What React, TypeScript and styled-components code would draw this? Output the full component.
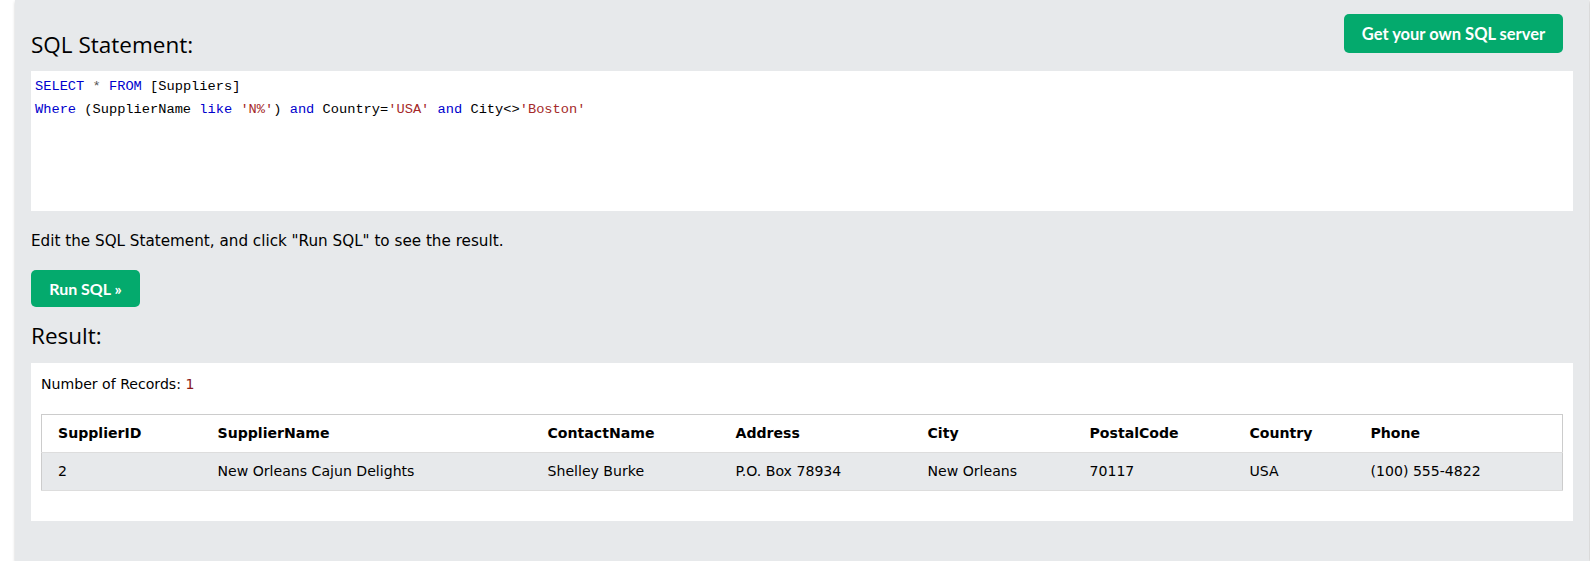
import styled, { createGlobalStyle } from "styled-components";

const GlobalStyle = createGlobalStyle`
  body {
    margin: 0;
    background: #ffffff;
    font-family: "DejaVu Sans", Verdana, sans-serif;
    color: #000000;
  }
`;

const Page = styled.div`
  padding-left: 15px;
  padding-right: 1px;
`;

const Panel = styled.div`
  background: #e7e9eb;
  padding: 0 16px 40px 16px;
  box-shadow: 0 2px 3px rgba(0, 0, 0, 0.18), 1px 0 2px rgba(0, 0, 0, 0.12);
`;

const TopRow = styled.div`
  display: flex;
  justify-content: space-between;
  align-items: flex-start;
`;

const Heading = styled.h2<{ $top: number }>`
  margin: ${(p) => p.$top}px 0 0 0;
  font-family: "Open Sans", "Noto Sans", sans-serif;
  font-weight: 400;
  font-size: 22.5px;
  line-height: 27px;
`;

const GreenButton = styled.button<{ $wide?: boolean }>`
  border: none;
  border-radius: 5px;
  background: #04aa6d;
  color: #ffffff;
  font-family: Lato, "Open Sans", sans-serif;
  font-weight: 700;
  font-size: ${(p) => (p.$wide ? "16.5px" : "16px")};
  height: ${(p) => (p.$wide ? "39px" : "37px")};
  padding: 0;
  white-space: nowrap;
  text-align: center;
  cursor: pointer;
`;

const ServerButton = styled(GreenButton)`
  margin-top: 14px;
  margin-right: 10px;
  width: 219px;
`;

const RunButton = styled(GreenButton)`
  display: block;
  width: 109px;
  margin-top: 18px;
`;

const CodeBox = styled.div`
  margin-top: 13px;
  background: #ffffff;
  height: 140px;
  box-sizing: border-box;
  padding: 5px 4px;
  font-family: "Liberation Mono", "DejaVu Sans Mono", monospace;
  font-size: 13.7px;
  line-height: 22.5px;
  white-space: pre;
`;

const Kw = styled.span`
  color: mediumblue;
`;

const Str = styled.span`
  color: #a52a2a;
`;

const Op = styled.span`
  color: #555555;
`;

const Hint = styled.p`
  margin: 19px 0 0 0;
  font-size: 15.2px;
  line-height: 22px;
`;

const ResultBox = styled.div`
  margin-top: 14px;
  background: #ffffff;
  padding: 10px;
`;

const Count = styled.div`
  font-size: 14.1px;
  line-height: 22px;
`;

const CountNum = styled.span`
  color: #8b1a1a;
`;

const Table = styled.table`
  margin: 19px 0 20px 0;
  width: 100%;
  border-collapse: collapse;
  table-layout: fixed;
  border: 1px solid #cccccc;
  font-size: 14.1px;
`;

const Col = styled.col<{ $w: number }>`
  width: ${(p) => p.$w}px;
`;

const HeadCell = styled.th`
  text-align: left;
  font-weight: 700;
  padding: 8px;
  line-height: 21px;
  &:first-child {
    padding-left: 16px;
  }
`;

const Row = styled.tr<{ $shade?: boolean }>`
  background: ${(p) => (p.$shade ? "#e7e9eb" : "#ffffff")};
  border-bottom: 1px solid #dddddd;
`;

const Cell = styled.td`
  padding: 8px;
  line-height: 21px;
  &:first-child {
    padding-left: 16px;
  }
`;

const columns = [
  { name: "SupplierID", w: 168 },
  { name: "SupplierName", w: 330 },
  { name: "ContactName", w: 188 },
  { name: "Address", w: 192 },
  { name: "City", w: 162 },
  { name: "PostalCode", w: 160 },
  { name: "Country", w: 121 },
  { name: "Phone", w: 200 },
];

const rows = [
  ["2", "New Orleans Cajun Delights", "Shelley Burke", "P.O. Box 78934", "New Orleans", "70117", "USA", "(100) 555-4822"],
];

export default function App() {
  return (
    <Page>
      <GlobalStyle />
      <Panel>
        <TopRow>
          <Heading $top={31}>SQL Statement:</Heading>
          <ServerButton $wide>Get your own SQL server</ServerButton>
        </TopRow>
        <CodeBox>
          <Kw>SELECT</Kw> <Op>*</Op> <Kw>FROM</Kw> [Suppliers]
          {"\n"}
          <Kw>Where</Kw> (SupplierName <Kw>like</Kw> <Str>'N%'</Str>) <Kw>and</Kw> Country=<Str>'USA'</Str>{" "}
          <Kw>and</Kw> City&lt;&gt;<Str>'Boston'</Str>
        </CodeBox>
        <Hint>Edit the SQL Statement, and click "Run SQL" to see the result.</Hint>
        <RunButton>Run SQL »</RunButton>
        <Heading $top={15}>Result:</Heading>
        <ResultBox>
          <Count>
            Number of Records: <CountNum>1</CountNum>
          </Count>
          <Table>
            <colgroup>
              {columns.map((c) => (
                <Col key={c.name} $w={c.w} />
              ))}
            </colgroup>
            <thead>
              <Row>
                {columns.map((c) => (
                  <HeadCell key={c.name}>{c.name}</HeadCell>
                ))}
              </Row>
            </thead>
            <tbody>
              {rows.map((r) => (
                <Row key={r[0]} $shade>
                  {r.map((v, i) => (
                    <Cell key={i}>{v}</Cell>
                  ))}
                </Row>
              ))}
            </tbody>
          </Table>
        </ResultBox>
      </Panel>
    </Page>
  );
}
